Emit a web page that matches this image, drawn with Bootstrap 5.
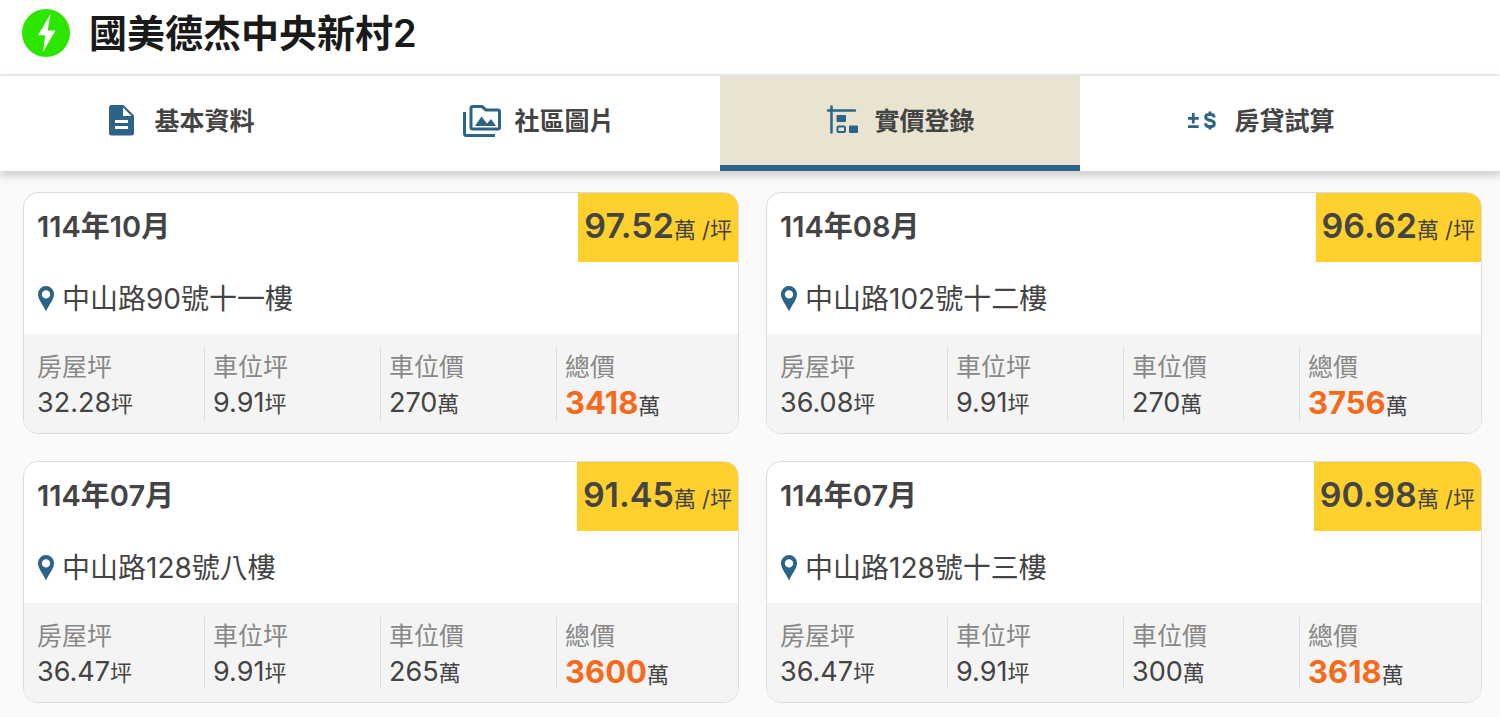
<!DOCTYPE html>
<html lang="zh-Hant">
<head>
<meta charset="utf-8">
<meta name="viewport" content="width=device-width, initial-scale=1">
<title>國美德杰中央新村2</title>
<link href="https://cdn.jsdelivr.net/npm/bootstrap@5.3.0/dist/css/bootstrap.min.css" rel="stylesheet">
<style>
  body { font-family: Inter, "Noto Sans CJK TC", sans-serif; background: #fafafa; color: #444; }
  .site-head { height: 76px; padding: 0 22px 8px; gap: 19px; border-bottom: 2px solid #eee; }
  .site-head h1 { font-size: 38px; line-height: 56px; font-weight: 600; color: #1a1a1a; }
  .tab-bar { box-shadow: 0 4px 8px 1px rgba(0,0,0,.17); }
  .tab-bar .nav-link { width: 24%; height: 95px; padding: 0 2px 0 0; gap: 13px; border-bottom: 6px solid transparent; border-radius: 0; color: #444; font-size: 25px; line-height: 36px; font-weight: 600; }
  .tab-bar .nav-link.active { background: #e8e4d1; border-bottom-color: #2b6488; }
  .tab-bar svg, .pin { color: #2b6488; flex: none; }
  .deals { display: grid; grid-template-columns: 1fr 1fr; gap: 27px; padding: 21px 18px 14px 23px; }
  .deal { background: #fff; border: 1px solid #dcdcdc; border-radius: 15px; overflow: hidden; }
  .deal-date { font-size: 29px; line-height: 40px; font-weight: 600; padding: 14px 0 0 13px; }
  .unit-price { background: #ffd02e; height: 69px; padding: 0 6px; font-size: 22px; line-height: 66px; }
  .unit-price strong { font-size: 34px; font-weight: 600; }
  .deal-place { font-size: 28px; line-height: 40px; padding: 17px 14px 15px; gap: 8px; }
  .deal-stats { background: #f4f4f4; padding: 14px 5px 13px; }
  .deal-stats > div { flex: 1 1 0; padding: 0 8px; border-right: 1px solid #dcdcdc; }
  .deal-stats > div:last-child { border-right-color: transparent; }
  .deal-stats dt { font-size: 25px; line-height: 38px; font-weight: 400; color: #888; }
  .deal-stats dd { font-size: 22px; height: 34px; line-height: 34px; margin: 0; white-space: nowrap; }
  .deal-stats dd span { font-size: 27px; }
  .deal-stats dd strong { font-size: 31px; font-weight: 700; color: #f76a1c; }
</style>
</head>
<body>
<svg class="d-none">
  <symbol id="pin" viewBox="0 0 16 26"><path fill="currentColor" fill-rule="evenodd" d="M8 0a8 8 0 0 0-8 8.200C0 14 5.500 19 8 25.500 10.500 19 16 14 16 8.200A8 8 0 0 0 8 0zm0 4.200a4.200 4.200 0 1 1 0 8.400 4.200 4.200 0 0 1 0-8.400z"/></symbol>
</svg>

<header class="site-head d-flex align-items-center bg-white">
  <svg width="48" height="48" viewBox="0 0 48 48" aria-hidden="true"><circle cx="24" cy="24" r="24" fill="#2ce600"/><path fill="#fff" d="M28.500 5 16 26.300h7.200L21 43l12.500-21.500h-7.800z"/></svg>
  <h1 class="m-0">國美德杰中央新村2</h1>
</header>

<nav class="tab-bar nav bg-white position-relative">
  <a class="nav-link d-flex align-items-center justify-content-center" href="#info">
    <svg width="38" height="34" viewBox="0 0 38 34"><path fill="currentColor" fill-rule="evenodd" d="M8 1h12.500L31 11.500V29q0 2.500-2.500 2.500H8.500Q6 31.500 6 29V3.500Q6 1 8.500 1zm12 2.500V12h8.500zM12 16v3h13v-3zm0 6v3h13v-3z"/></svg>
    <span>基本資料</span>
  </a>
  <a class="nav-link d-flex align-items-center justify-content-center" href="#photos">
    <svg width="38" height="34" viewBox="0 0 38 34"><g fill="none" stroke="currentColor" stroke-width="3" stroke-linejoin="round"><path d="M9.500 2.500h9.500l4 3.500h12q1.500 0 1.500 1.500v16q0 1.500-1.500 1.500H9.500Q8 25 8 23.500V4q0-1.500 1.500-1.500z"/><path d="M1.500 8v21.500q0 2 2 2H32"/></g><path fill="currentColor" d="m12 22 6.500-9.500 5.500 7 4-4.500 5 7z"/></svg>
    <span>社區圖片</span>
  </a>
  <a class="nav-link active d-flex align-items-center justify-content-center" href="#deals" aria-current="page">
    <svg width="38" height="34" viewBox="0 0 38 34"><path stroke="currentColor" stroke-width="2.500" stroke-linecap="round" d="M8.500 2.500v26M5 6.500H32"/><g fill="currentColor"><rect x="13.500" y="11" width="9.500" height="7" rx="1"/><rect x="26" y="21.500" width="9" height="7.500" rx="1"/></g><rect x="14.500" y="22.500" width="7.500" height="5.500" rx="1" fill="none" stroke="currentColor" stroke-width="2"/></svg>
    <span>實價登錄</span>
  </a>
  <a class="nav-link d-flex align-items-center justify-content-center" href="#loan">
    <svg width="38" height="34" viewBox="0 0 38 34" fill="none" stroke="currentColor"><path stroke-width="2.800" d="M10.300 9v10.500M5 14.300h10.700M5 22.600h10.700"/><path stroke-width="3" stroke-linejoin="round" d="M31 13.500v-1q-.5-2-3-2h-2.300q-3 0-3 2.600 0 2 2.500 2.600l3.300 1q2.800.8 2.800 2.900 0 2.900-3 2.900h-2.600q-2.700 0-3-2.500v-.8M27 7.500v3M27 22.500v3"/></svg>
    <span>房貸試算</span>
  </a>
</nav>

<main class="deals">
  <article class="deal">
    <div class="d-flex justify-content-between align-items-start">
      <div class="deal-date">114年10月</div>
      <div class="unit-price"><strong>97.52</strong>萬 /坪</div>
    </div>
    <div class="deal-place d-flex align-items-center"><svg class="pin" width="16" height="26"><use href="#pin"/></svg>中山路90號十一樓</div>
    <dl class="deal-stats d-flex m-0">
      <div><dt>房屋坪</dt><dd><span>32.28</span>坪</dd></div>
      <div><dt>車位坪</dt><dd><span>9.91</span>坪</dd></div>
      <div><dt>車位價</dt><dd><span>270</span>萬</dd></div>
      <div><dt>總價</dt><dd><strong>3418</strong>萬</dd></div>
    </dl>
  </article>
  <article class="deal">
    <div class="d-flex justify-content-between align-items-start">
      <div class="deal-date">114年08月</div>
      <div class="unit-price"><strong>96.62</strong>萬 /坪</div>
    </div>
    <div class="deal-place d-flex align-items-center"><svg class="pin" width="16" height="26"><use href="#pin"/></svg>中山路102號十二樓</div>
    <dl class="deal-stats d-flex m-0">
      <div><dt>房屋坪</dt><dd><span>36.08</span>坪</dd></div>
      <div><dt>車位坪</dt><dd><span>9.91</span>坪</dd></div>
      <div><dt>車位價</dt><dd><span>270</span>萬</dd></div>
      <div><dt>總價</dt><dd><strong>3756</strong>萬</dd></div>
    </dl>
  </article>
  <article class="deal">
    <div class="d-flex justify-content-between align-items-start">
      <div class="deal-date">114年07月</div>
      <div class="unit-price"><strong>91.45</strong>萬 /坪</div>
    </div>
    <div class="deal-place d-flex align-items-center"><svg class="pin" width="16" height="26"><use href="#pin"/></svg>中山路128號八樓</div>
    <dl class="deal-stats d-flex m-0">
      <div><dt>房屋坪</dt><dd><span>36.47</span>坪</dd></div>
      <div><dt>車位坪</dt><dd><span>9.91</span>坪</dd></div>
      <div><dt>車位價</dt><dd><span>265</span>萬</dd></div>
      <div><dt>總價</dt><dd><strong>3600</strong>萬</dd></div>
    </dl>
  </article>
  <article class="deal">
    <div class="d-flex justify-content-between align-items-start">
      <div class="deal-date">114年07月</div>
      <div class="unit-price"><strong>90.98</strong>萬 /坪</div>
    </div>
    <div class="deal-place d-flex align-items-center"><svg class="pin" width="16" height="26"><use href="#pin"/></svg>中山路128號十三樓</div>
    <dl class="deal-stats d-flex m-0">
      <div><dt>房屋坪</dt><dd><span>36.47</span>坪</dd></div>
      <div><dt>車位坪</dt><dd><span>9.91</span>坪</dd></div>
      <div><dt>車位價</dt><dd><span>300</span>萬</dd></div>
      <div><dt>總價</dt><dd><strong>3618</strong>萬</dd></div>
    </dl>
  </article>
</main>
<script src="https://cdn.jsdelivr.net/npm/bootstrap@5.3.0/dist/js/bootstrap.bundle.min.js"></script>
</body>
</html>
